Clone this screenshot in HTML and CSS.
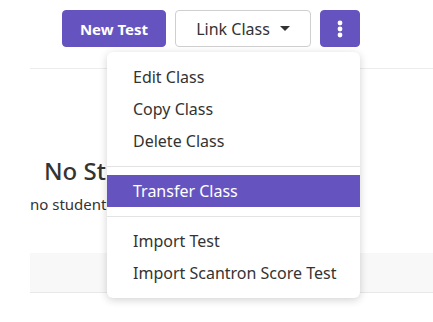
FILE: index.html
```html
<!DOCTYPE html>
<html lang="en">
<head>
    <meta charset="UTF-8">
    <title>Class</title>
    <link rel="stylesheet" href="styles.css">
</head>
<body>
    <div class="toolbar">
        <div class="actions">
            <button class="btn btn-primary">New Test</button>
            <button class="btn btn-outline">Link Class <span class="caret"></span></button>
            <button class="btn btn-primary btn-kebab">
                <svg width="6" height="18" viewBox="0 0 6 18"><circle cx="3" cy="3" r="2.4" fill="#fff"/><circle cx="3" cy="9" r="2.4" fill="#fff"/><circle cx="3" cy="15" r="2.4" fill="#fff"/></svg>
            </button>

            <ul class="menu">
                <li>Edit Class</li>
                <li>Copy Class</li>
                <li>Delete Class</li>
                <li class="divider"></li>
                <li class="active">Transfer Class</li>
                <li class="divider"></li>
                <li>Import Test</li>
                <li>Import Scantron Score Test</li>
            </ul>
        </div>
    </div>

    <div class="card">
        <div class="empty">
            <h2>No Students</h2>
            <p>no students in this class yet</p>
        </div>
        <div class="card-footer"></div>
    </div>
</body>
</html>
```

FILE: styles.css
```css
html, body {
    min-height: 100%;
}

body {
    margin: 0;
    min-height: 322px;
    font-family: "Noto Sans", "Open Sans", sans-serif;
    background: #fff;
    color: #333;
}

.toolbar {
    display: flex;
    justify-content: flex-end;
    padding: 10px 73px 0 0;
}

.actions {
    position: relative;
    display: flex;
    gap: 9px;
}

.btn {
    height: 37px;
    border-radius: 4px;
    font-family: inherit;
    font-size: 15px;
    padding: 0 16px;
    cursor: pointer;
    display: flex;
    align-items: center;
    justify-content: center;
}

.btn-primary {
    background: #6554c0;
    border: 1px solid #6554c0;
    color: #fff;
    font-weight: bold;
    width: 104px;
}

.btn-outline {
    background: #fff;
    border: 1px solid #cfcfcf;
    color: #333;
    font-size: 16px;
    width: 136px;
    gap: 10px;
}

.caret {
    width: 0;
    height: 0;
    border-left: 5px solid transparent;
    border-right: 5px solid transparent;
    border-top: 5px solid #333;
}

.btn-kebab {
    width: 40px;
    padding: 0;
}

.menu {
    position: absolute;
    top: 42px;
    right: 0;
    width: 253px;
    margin: 0;
    padding: 9px 0;
    list-style: none;
    background: #fff;
    border-radius: 6px;
    box-shadow: 0 2px 8px rgba(0,0,0,0.18);
    z-index: 10;
}

.menu li {
    height: 32px;
    line-height: 32px;
    padding-left: 26px;
    font-size: 16px;
    color: #333;
}

.menu li.active {
    background: #6554c0;
    color: #fff;
}

.menu li.divider {
    height: 1px;
    margin: 9px 0 8px;
    padding: 0;
    background: #e3e3e3;
}

.card {
    margin: 21px 0 0 30px;
    border-top: 1px solid #ececec;
}

.empty {
    padding: 86px 0 0 14px;
}

.empty h2 {
    margin: 0;
    font-size: 24px;
    font-weight: 500;
    line-height: 32px;
}

.empty p {
    margin: 6px 0 0 -14px;
    font-size: 15px;
    line-height: 22px;
}

.card-footer {
    margin-top: 38px;
    height: 39px;
    background: #f8f8f8;
    border-bottom: 1px solid #e8e8e8;
}
```
